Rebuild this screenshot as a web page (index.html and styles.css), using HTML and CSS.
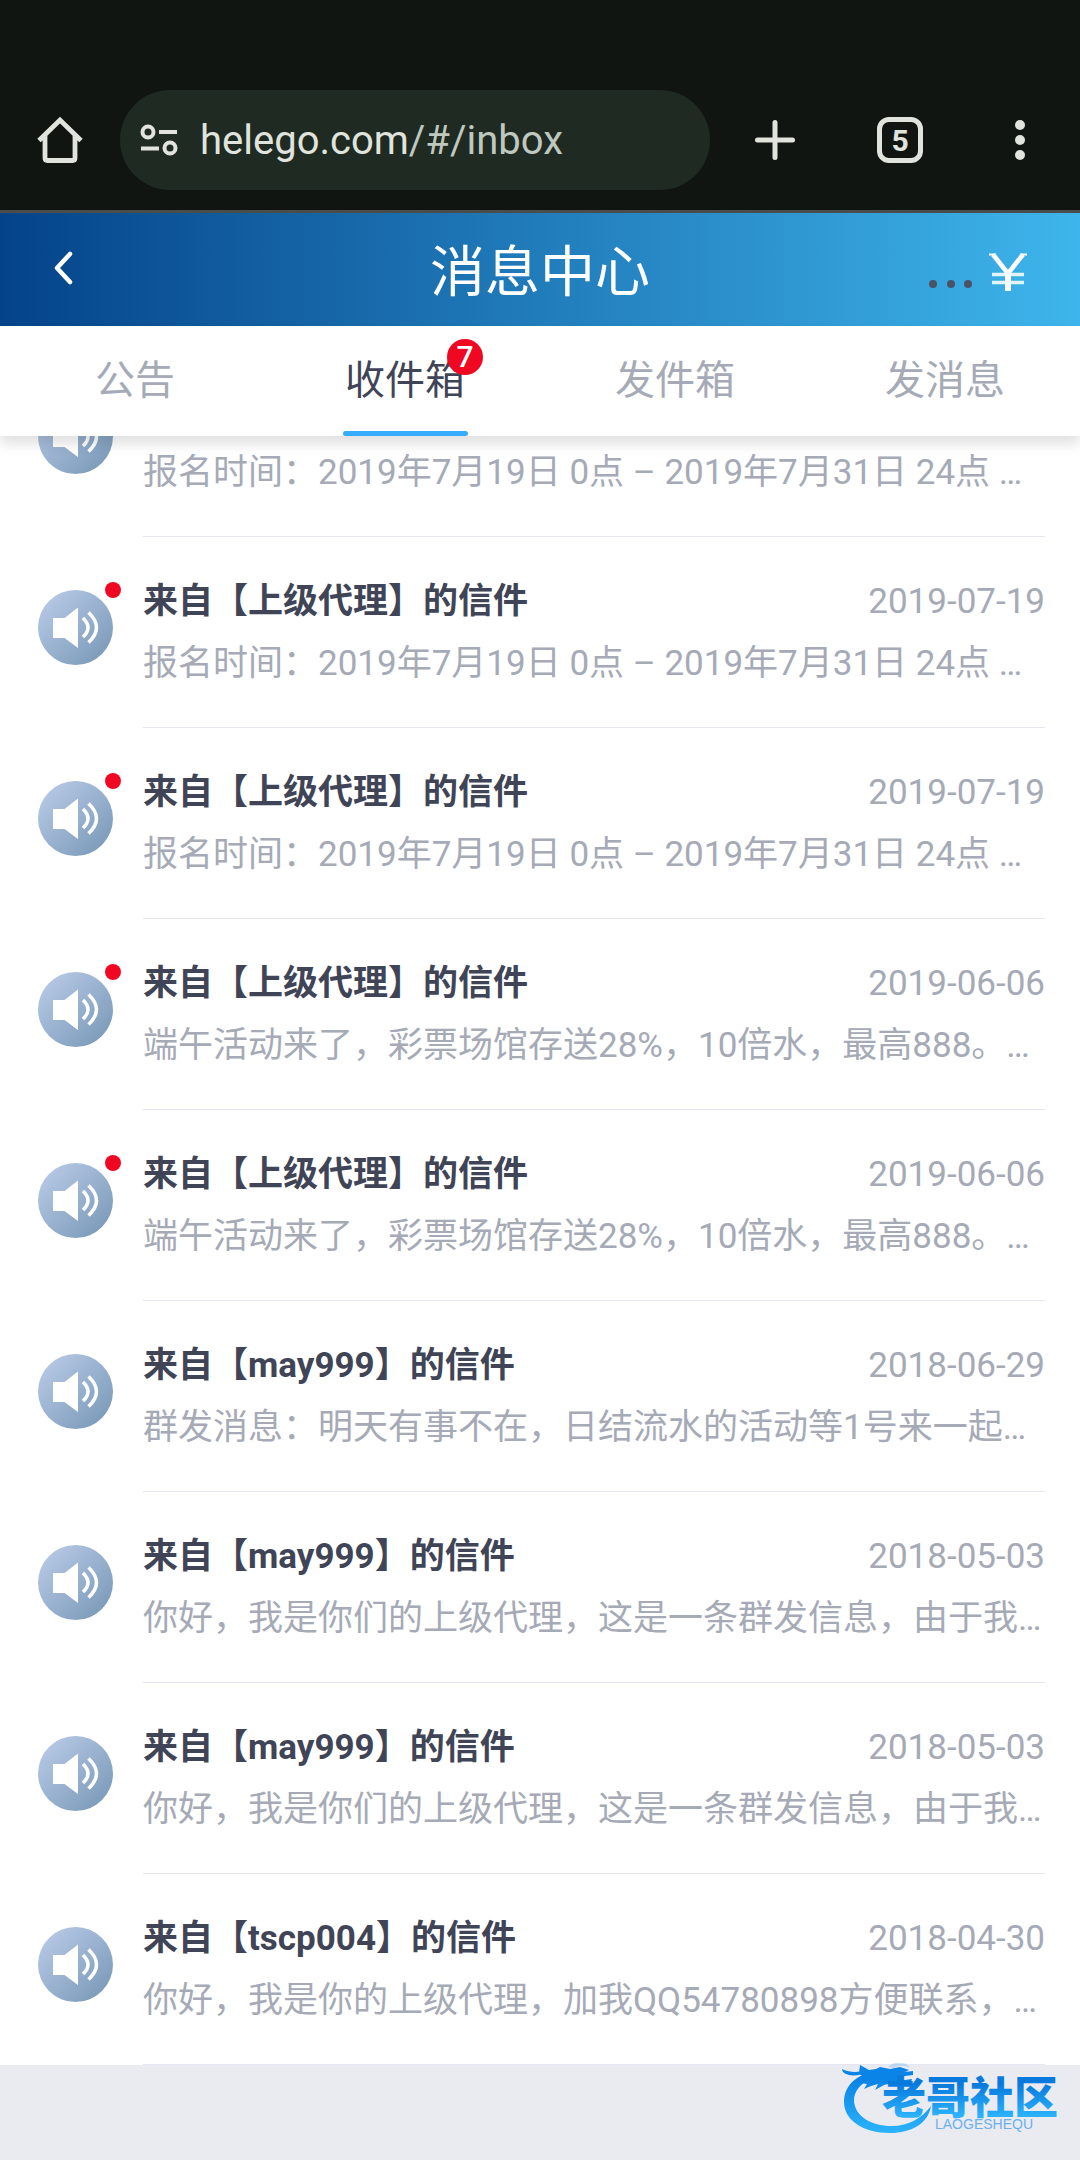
FILE: index.html
```html
<!DOCTYPE html>
<html lang="zh-CN">
<head>
<meta charset="utf-8">
<meta name="viewport" content="width=device-width, initial-scale=1">
<title>消息中心</title>
<link rel="stylesheet" href="styles.css">
</head>
<body>
<svg class="defs" aria-hidden="true">
  <defs>
    <linearGradient id="disc" x1="0" y1="0" x2="1" y2="1">
      <stop offset="0.1" stop-color="#b6c8e5"/>
      <stop offset="0.9" stop-color="#7b9bb9"/>
    </linearGradient>
    <symbol id="speaker" viewBox="0 0 75 75">
      <circle cx="37.500" cy="37.500" r="37.500" fill="url(#disc)"/>
      <path d="M15 28h11.500L40 17.500V58L26.500 48H15z" fill="#fff"/>
      <path d="M45 28q10 9.500 0 19M50.500 22.500q16 15 0 30" fill="none" stroke="#fff" stroke-width="3.600"/>
    </symbol>
  </defs>
</svg>

<div class="browser">
  <button class="tool" aria-label="主页">
    <svg width="46" height="48" viewBox="0 0 46 48"><path d="M2 24.500 23 4l21 20.500M8 19v23q0 2.500 2.500 2.500h25q2.500 0 2.500-2.500V19" fill="none" stroke="#e0e4dd" stroke-width="4.800"/></svg>
  </button>
  <a class="address" href="#/inbox">
    <svg width="38" height="32" viewBox="0 0 38 32"><g fill="none" stroke="#e0e4dd" stroke-width="4"><circle cx="8" cy="8" r="5.500"/><circle cx="30" cy="24" r="5.500"/><path d="M19 8h18M1 24.500h18"/></g></svg>
    <span class="url">helego.com<span class="path">/#/inbox</span></span>
  </a>
  <button class="tool" aria-label="新标签页">
    <svg width="40" height="40" viewBox="0 0 40 40"><path d="M20 2.500v35M2.500 20h35" fill="none" stroke="#e0e4dd" stroke-width="5" stroke-linecap="round"/></svg>
  </button>
  <button class="tool" aria-label="标签页"><span class="count">5</span></button>
  <button class="tool" aria-label="更多">
    <svg width="10" height="40" viewBox="0 0 10 40"><g fill="#e0e4dd"><circle cx="5" cy="5" r="5"/><circle cx="5" cy="20" r="5"/><circle cx="5" cy="35" r="5"/></g></svg>
  </button>
</div>

<header class="header">
  <button class="back" aria-label="返回">
    <svg width="20" height="34" viewBox="0 0 20 34"><path d="M17 3 4 17l13 14" fill="none" stroke="#fff" stroke-width="4.500" stroke-linecap="round" stroke-linejoin="round"/></svg>
  </button>
  <h1 class="title">消息中心</h1>
  <button class="wallet" aria-label="余额">
    <svg width="44" height="13" viewBox="0 0 44 13"><g fill="#4a5266"><circle cx="4" cy="5" r="4"/><circle cx="22" cy="5" r="4"/><circle cx="39" cy="5" r="4"/></g></svg>
    <svg width="38" height="39" viewBox="0 0 38 39"><g fill="none" stroke="#fff"><path d="M0 1.500h7M31 1.500h7" stroke-width="2"/><path d="M4 1.500 19 20.500 34 1.500" stroke-width="4.600"/><path d="M19 20v18" stroke-width="6"/><path d="M3 21.500h32M3 29.500h32" stroke-width="3.400" stroke-opacity="0.850"/></g></svg>
  </button>
</header>

<nav class="tabs">
  <a class="tab" href="#/notice">公告</a>
  <a class="tab active" href="#/inbox"><span class="label">收件箱<span class="badge">7</span></span></a>
  <a class="tab" href="#/outbox">发件箱</a>
  <a class="tab" href="#/compose">发消息</a>
</nav>

<main>
<ul class="messages">
  <li class="message scrolled">
    <span class="avatar"><svg><use href="#speaker"/></svg></span>
    <div class="body"><p class="text">报名时间：2019年7月19日 0点 – 2019年7月31日 24点 …</p></div>
  </li>
  <li class="message">
    <span class="avatar unread"><svg><use href="#speaker"/></svg></span>
    <div class="body">
      <div class="head"><h2 class="from">来自【上级代理】的信件</h2><time class="date">2019-07-19</time></div>
      <p class="text">报名时间：2019年7月19日 0点 – 2019年7月31日 24点 …</p>
    </div>
  </li>
  <li class="message">
    <span class="avatar unread"><svg><use href="#speaker"/></svg></span>
    <div class="body">
      <div class="head"><h2 class="from">来自【上级代理】的信件</h2><time class="date">2019-07-19</time></div>
      <p class="text">报名时间：2019年7月19日 0点 – 2019年7月31日 24点 …</p>
    </div>
  </li>
  <li class="message">
    <span class="avatar unread"><svg><use href="#speaker"/></svg></span>
    <div class="body">
      <div class="head"><h2 class="from">来自【上级代理】的信件</h2><time class="date">2019-06-06</time></div>
      <p class="text">端午活动来了，彩票场馆存送28%，10倍水，最高888。…</p>
    </div>
  </li>
  <li class="message">
    <span class="avatar unread"><svg><use href="#speaker"/></svg></span>
    <div class="body">
      <div class="head"><h2 class="from">来自【上级代理】的信件</h2><time class="date">2019-06-06</time></div>
      <p class="text">端午活动来了，彩票场馆存送28%，10倍水，最高888。…</p>
    </div>
  </li>
  <li class="message">
    <span class="avatar"><svg><use href="#speaker"/></svg></span>
    <div class="body">
      <div class="head"><h2 class="from">来自【may999】的信件</h2><time class="date">2018-06-29</time></div>
      <p class="text">群发消息：明天有事不在，日结流水的活动等1号来一起…</p>
    </div>
  </li>
  <li class="message">
    <span class="avatar"><svg><use href="#speaker"/></svg></span>
    <div class="body">
      <div class="head"><h2 class="from">来自【may999】的信件</h2><time class="date">2018-05-03</time></div>
      <p class="text">你好，我是你们的上级代理，这是一条群发信息，由于我…</p>
    </div>
  </li>
  <li class="message">
    <span class="avatar"><svg><use href="#speaker"/></svg></span>
    <div class="body">
      <div class="head"><h2 class="from">来自【may999】的信件</h2><time class="date">2018-05-03</time></div>
      <p class="text">你好，我是你们的上级代理，这是一条群发信息，由于我…</p>
    </div>
  </li>
  <li class="message">
    <span class="avatar"><svg><use href="#speaker"/></svg></span>
    <div class="body">
      <div class="head"><h2 class="from">来自【tscp004】的信件</h2><time class="date">2018-04-30</time></div>
      <p class="text">你好，我是你的上级代理，加我QQ54780898方便联系，…</p>
    </div>
  </li>
</ul>
</main>

<svg class="watermark" viewBox="0 0 226 80" role="img" aria-label="老哥社区">
  <defs>
    <linearGradient id="ink" gradientUnits="userSpaceOnUse" x1="0" y1="8" x2="0" y2="76"><stop offset="0.200" stop-color="#0a84e6"/><stop offset="1" stop-color="#2cb4fb"/></linearGradient>
    <linearGradient id="word" gradientUnits="userSpaceOnUse" x1="0" y1="26" x2="0" y2="58"><stop offset="0" stop-color="#0879dd"/><stop offset="1" stop-color="#2cb2fa"/></linearGradient>
  </defs>
  <g fill="url(#ink)">
    <path d="M38 14C20 15 6 27 6 44c0 18 19 31 46 31 21 0 38-9 41-27-9 12-22 20-39 20-22 0-36-10-38-24-1-11 8-20 20-25z"/>
    <path d="M4 11c8 4 16 3 22 2 3 0 5 0 6 1-8 3-16 4-21 3-4-1-7-3-7-6z"/>
    <path d="M22 7l9 5 7-1 4-2 10 2 10-2 9 3-4 2 8-1v4l-8 1-6 3 6 1 7-1-2 6-5-1-1 2-12-3-8 2-9 5 3-6-7 2-7 3 3-5-7-1 3-6-4-4z"/>
    <path d="M50 9c4-4 8-5 13-4 5 0 7 2 9 5-6-3-12-3-16 0z" opacity="0.200"/>
  </g>
  <text class="mark" x="44" y="56" fill="url(#word)">老哥社区</text>
  <text class="latin" x="97" y="71" fill="#6bb0ec">LAOGESHEQU</text>
</svg>
</body>
</html>
```
FILE: styles.css
```css
* { box-sizing: border-box; }

body {
  margin: 0;
  min-height: 100vh;
  background: #e9ebf0;
  color: #3f4557;
  font-family: Roboto, "Noto Sans CJK SC", sans-serif;
}

button {
  display: flex;
  align-items: center;
  justify-content: center;
  padding: 0;
  border: 0;
  background: none;
  color: inherit;
  font: inherit;
}

a { color: inherit; text-decoration: none; }
svg { display: block; flex: none; }
.defs { position: absolute; width: 0; height: 0; }

.browser {
  display: flex;
  align-items: center;
  padding: 90px 0 20px;
  border-bottom: 3px solid #4a4d49;
  background: #101511;
}
.tool { width: 120px; height: 100px; }
.tool:nth-of-type(2) { width: 130px; }
.address {
  display: flex;
  flex: 1;
  align-items: center;
  gap: 22px;
  height: 100px;
  padding: 0 20px;
  border-radius: 50px;
  background: #1f2a23;
}
.url { padding-top: 2px; color: #e0e4dd; font-size: 40px; line-height: 48px; }
.path { color: #bfc8bf; }
.count {
  width: 46px;
  height: 46px;
  border: 5px solid #e0e4dd;
  border-radius: 12px;
  color: #e0e4dd;
  font-size: 30px;
  font-weight: 700;
  line-height: 37px;
  text-align: center;
}

.header {
  display: grid;
  grid-template-columns: 1fr auto 1fr;
  align-items: center;
  height: 113px;
  padding: 0 53px;
  background: linear-gradient(90deg, #044389, #3eb5ec);
  color: #fff;
}
.back { justify-self: start; padding-bottom: 4px; }
.title { margin: 0; padding-top: 4px; font-size: 55px; font-weight: 400; line-height: 80px; }
.wallet { align-items: flex-end; justify-self: end; gap: 16px; padding-top: 6px; }

.tabs {
  position: relative;
  z-index: 1;
  display: flex;
  height: 110px;
  background: #fff;
  box-shadow: 0 8px 12px rgba(0, 0, 0, 0.12);
}
.tab {
  position: relative;
  flex: 1;
  padding-top: 26px;
  color: #a5aab6;
  font-size: 40px;
  line-height: 58px;
  text-align: center;
}
.active { color: #3f4557; }
.active::after {
  content: "";
  position: absolute;
  bottom: 0;
  left: 50%;
  width: 125px;
  height: 5px;
  margin-left: -62px;
  border-radius: 3px;
  background: #36acfe;
}
.label { position: relative; }
.badge {
  position: absolute;
  top: -18px;
  right: -18px;
  width: 36px;
  height: 36px;
  border-radius: 50%;
  background: #f00823;
  color: #fff;
  font-size: 30px;
  font-weight: 500;
  line-height: 36px;
}

.messages { margin: 0; padding: 0; background: #fff; list-style: none; }
.message { display: flex; gap: 30px; padding: 0 35px 0 38px; }
.scrolled { margin-top: -90px; }
.avatar { position: relative; width: 75px; height: 75px; margin-top: 53px; }
.avatar svg { width: 75px; height: 75px; }
.unread::after {
  content: "";
  position: absolute;
  top: -8px;
  right: -8px;
  width: 16px;
  height: 16px;
  border-radius: 50%;
  background: #f00823;
}
.body {
  display: flex;
  flex: 1;
  flex-direction: column;
  justify-content: flex-end;
  gap: 8px;
  min-width: 0;
  height: 191px;
  padding-bottom: 36px;
  border-bottom: 1px solid #e4e6f3;
}
.head { display: flex; align-items: center; justify-content: space-between; }
.from { margin: 0; font-size: 35px; font-weight: 700; line-height: 54px; }
.date { color: #a5aab6; font-size: 35px; line-height: 54px; }
.text {
  margin: 0;
  overflow: hidden;
  color: #a5aab6;
  font-size: 35px;
  line-height: 54px;
  text-overflow: ellipsis;
  white-space: nowrap;
}

.watermark { position: absolute; top: 2058px; right: 16px; width: 226px; height: 80px; }
.mark { font-family: "Noto Sans CJK SC", sans-serif; font-size: 44px; font-weight: 900; }
.latin { font-family: "Liberation Sans", sans-serif; font-size: 14px; }
```
